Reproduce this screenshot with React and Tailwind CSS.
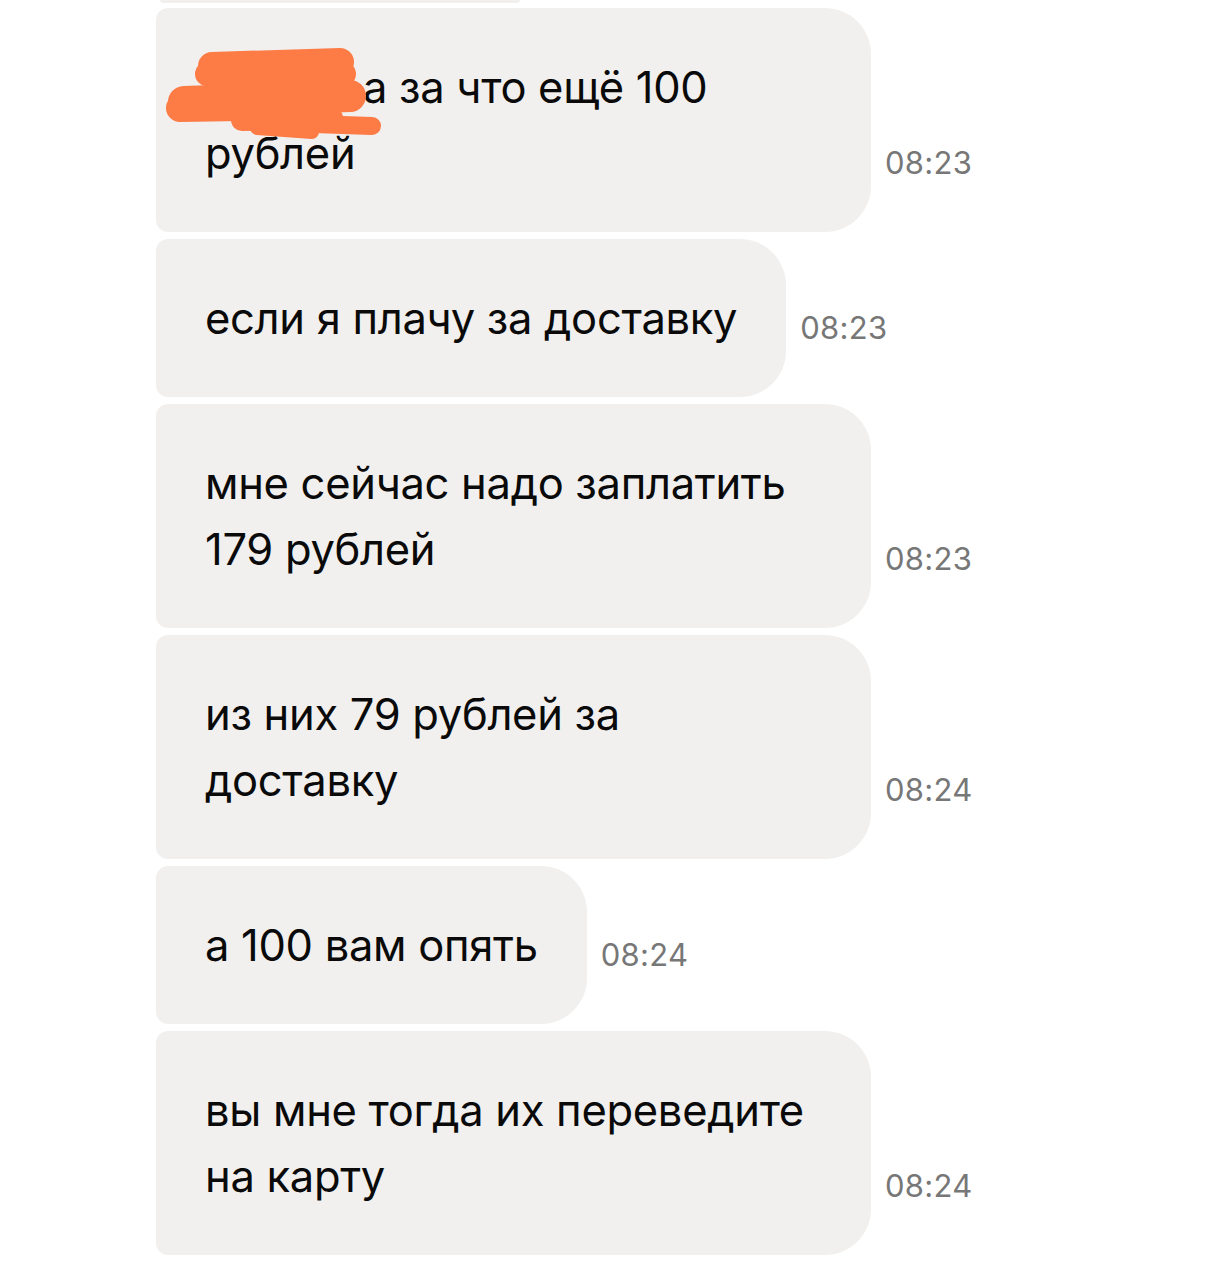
import React from "react";

const msgs = [
  { lines: ["а за что ещё 100", "рублей"], time: "08:23", redact: true },
  { lines: ["если я плачу за доставку"], time: "08:23" },
  { lines: ["мне сейчас надо заплатить", "179 рублей"], time: "08:23" },
  { lines: ["из них 79 рублей за", "доставку"], time: "08:24" },
  { lines: ["а 100 вам опять"], time: "08:24" },
  { lines: ["вы мне тогда их переведите", "на карту"], time: "08:24" },
];

function Bubble({ m }) {
  const wide = m.lines.length > 1;
  return (
    <div className="flex items-end">
      <div
        className={`relative bg-[#f1f0ee] rounded-tl-[12px] rounded-bl-[12px] rounded-tr-[46px] rounded-br-[46px] pl-[49px] pr-[49px] py-[46px] text-[43.5px] leading-[66px] text-[#0a0a0a] tracking-[-0.3px] whitespace-nowrap ${wide ? "w-[715px]" : ""}`}
      >
        {m.lines.map((l, i) => (
          <div key={i} className={i === 0 && m.redact ? "pl-[158px]" : ""}>
            {l}
          </div>
        ))}
        {m.redact && (
          <svg
            className="absolute left-[6px] top-[36px]"
            width="230"
            height="100"
            viewBox="0 0 230 100"
          >
            <g
              stroke="#fd7b45"
              strokeLinecap="round"
              strokeLinejoin="round"
              fill="none"
            >
              <path d="M50 22 L178 18" strokeWidth="28" />
              <path d="M45 30 L182 30" strokeWidth="24" />
              <path d="M22 58 L188 52" strokeWidth="32" />
              <path d="M18 64 L130 62" strokeWidth="28" />
              <path d="M90 78 L210 82" strokeWidth="18" />
              <path d="M80 76 L170 74" strokeWidth="22" />
              <path d="M95 84 L150 88" strokeWidth="14" />
            </g>
          </svg>
        )}
      </div>
      <div className="ml-[14px] mb-[51px] text-[31px] leading-[36px] text-[#777777] tracking-[0.3px]">
        {m.time}
      </div>
    </div>
  );
}

export default function App() {
  return (
    <div
      className="w-[1220px] h-[1261px] bg-white overflow-hidden relative"
      style={{ fontFamily: "Inter, 'Noto Sans', sans-serif" }}
    >
      <div className="ml-[160px] w-[360px] h-[3px] bg-[#f1f0ee] rounded-b-[10px]" />
      <div className="ml-[156px] mt-[5px] flex flex-col gap-[7px]">
        {msgs.map((m, i) => (
          <Bubble key={i} m={m} />
        ))}
        <div className="ml-[12px] w-[400px] h-[6px] bg-[#f1f0ee] rounded-t-[10px]" />
      </div>
    </div>
  );
}
